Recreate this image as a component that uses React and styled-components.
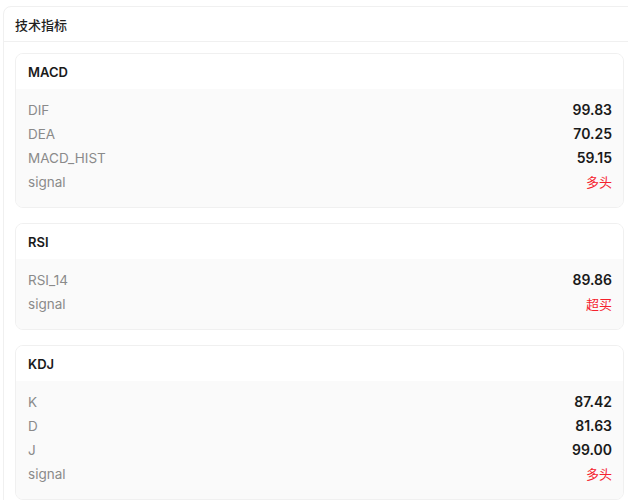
import React from 'react';
import styled, { createGlobalStyle } from 'styled-components';

const GlobalStyle = createGlobalStyle`
  html, body {
    margin: 0;
    padding: 0;
    overflow: hidden;
    background: #ffffff;
  }
  body {
    font-family: Inter, "Noto Sans CJK SC", sans-serif;
    -webkit-font-smoothing: antialiased;
  }
`;

const Page = styled.div`
  padding: 6px 0 0 3px;
`;

const Panel = styled.div`
  width: 631px;
  border: 1px solid #f0f0f0;
  border-radius: 8px;
  background: #ffffff;
`;

const PanelHeader = styled.div`
  height: 34px;
  display: flex;
  align-items: center;
  padding: 0 11px;
  border-bottom: 1px solid #f0f0f0;
  font-size: 13px;
  font-weight: 500;
  color: #1f1f1f;
`;

const PanelBody = styled.div`
  display: flex;
  flex-direction: column;
  gap: 15px;
  padding: 11px;
`;

const Card = styled.div`
  border: 1px solid #f0f0f0;
  border-radius: 8px;
  overflow: hidden;
`;

const CardHeader = styled.div`
  height: 35px;
  display: flex;
  align-items: center;
  padding: 0 12px;
  background: #ffffff;
  font-size: 13px;
  font-weight: 600;
  color: #1a1a1a;
`;

const CardBody = styled.div`
  background: #fafafa;
  padding: 9px 11px 13px 12px;
`;

const Row = styled.div`
  display: flex;
  justify-content: space-between;
  align-items: baseline;
  height: 24px;
  line-height: 24px;
`;

const Label = styled.span`
  font-size: 13.5px;
  color: #8a8a8a;
`;

const Value = styled.span`
  font-size: ${props => (props.signal ? '13px' : '14px')};
  font-weight: ${props => (props.signal ? 400 : 600)};
  color: ${props => (props.signal ? '#f5222d' : '#1a1a1a')};
`;

const indicators = [
  {
    name: 'MACD',
    rows: [
      ['DIF', '99.83'],
      ['DEA', '70.25'],
      ['MACD_HIST', '59.15'],
      ['signal', '多头', true],
    ],
  },
  {
    name: 'RSI',
    rows: [
      ['RSI_14', '89.86'],
      ['signal', '超买', true],
    ],
  },
  {
    name: 'KDJ',
    rows: [
      ['K', '87.42'],
      ['D', '81.63'],
      ['J', '99.00'],
      ['signal', '多头', true],
    ],
  },
];

const App = () => (
  <>
    <GlobalStyle />
    <Page>
      <Panel>
        <PanelHeader>技术指标</PanelHeader>
        <PanelBody>
          {indicators.map(ind => (
            <Card key={ind.name}>
              <CardHeader>{ind.name}</CardHeader>
              <CardBody>
                {ind.rows.map(([label, value, signal]) => (
                  <Row key={label}>
                    <Label>{label}</Label>
                    <Value signal={signal}>{value}</Value>
                  </Row>
                ))}
              </CardBody>
            </Card>
          ))}
        </PanelBody>
      </Panel>
    </Page>
  </>
);

export default App;
